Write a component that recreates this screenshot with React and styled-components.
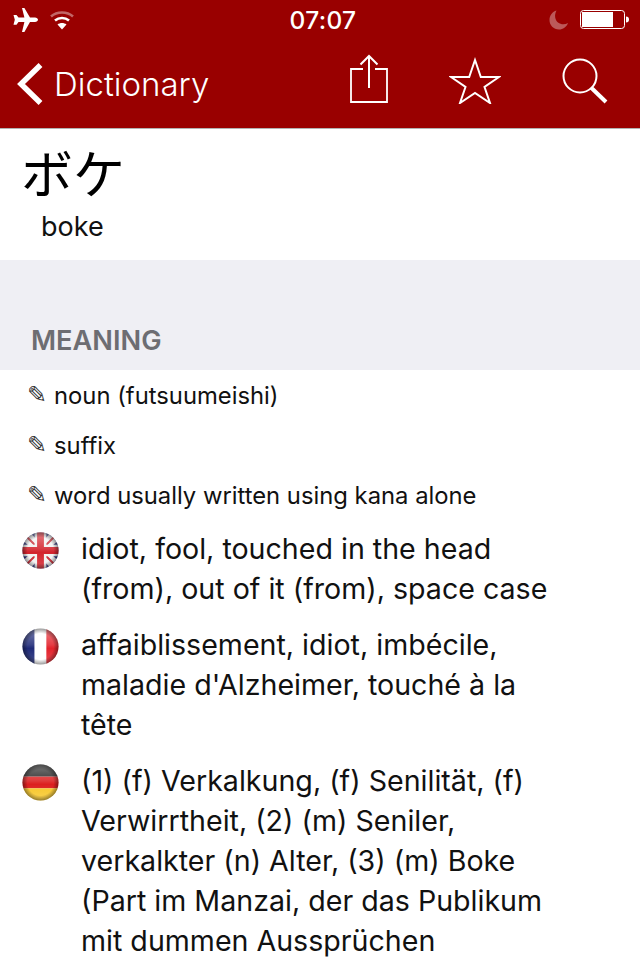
import React from 'react';
import styled, { createGlobalStyle } from 'styled-components';

const GlobalStyle = createGlobalStyle`
  html, body {
    margin: 0;
    padding: 0;
    background: #ffffff;
    overflow: hidden;
  }
  body {
    font-family: Inter, 'Liberation Sans', sans-serif;
  }
`;

const Page = styled.div`
  width: 640px;
  height: 960px;
  overflow: hidden;
  background: #ffffff;
`;

const Header = styled.header`
  height: 128px;
  background: #990000;
  border-bottom: 1px solid #b2b2b2;
  color: #ffffff;
`;

const StatusBar = styled.div`
  height: 40px;
  display: grid;
  grid-template-columns: 1fr auto 1fr;
  align-items: center;
  padding: 0 10px 0 12px;
`;

const StatusLeft = styled.div`
  display: flex;
  align-items: center;
  gap: 11px;
`;

const StatusRight = styled.div`
  display: flex;
  align-items: center;
  justify-content: flex-end;
  gap: 11px;
`;

const Clock = styled.div`
  font-size: 24.5px;
  font-weight: 500;
  letter-spacing: 0.3px;
  margin-left: 4px;
`;

const NavBar = styled.nav`
  height: 88px;
  display: flex;
  align-items: center;
  padding: 0 32px 0 16px;
`;

const BackLink = styled.div`
  display: flex;
  align-items: center;
  gap: 10px;
  flex: 1;
  font-size: 33px;
  font-weight: 300;
`;

const NavActions = styled.div`
  display: flex;
  align-items: flex-end;
  gap: 61px;
  margin-bottom: 10px;
`;

const TitleBlock = styled.section`
  height: 131px;
  padding-left: 21px;
`;

const Kana = styled.div`
  font-family: 'Noto Sans CJK JP', sans-serif;
  font-size: 52px;
  line-height: 70px;
  padding-top: 8px;
  color: #000000;
`;

const Reading = styled.div`
  font-size: 27px;
  line-height: 32px;
  margin-top: 4px;
  padding-left: 20px;
  color: #111111;
`;

const SectionHeader = styled.div`
  height: 110px;
  box-sizing: border-box;
  background: #efeff4;
  display: flex;
  align-items: flex-end;
  padding: 0 0 13px 31px;
  font-size: 27.2px;
  line-height: 32px;
  font-weight: 600;
  color: #6d6d72;
`;

const PartRow = styled.div`
  height: 50px;
  display: flex;
  align-items: center;
  padding-left: 27px;
  font-size: 23.8px;
  color: #111111;
`;

const Pencil = styled.span`
  font-family: 'DejaVu Sans', sans-serif;
  font-size: 24px;
  width: 27px;
  color: #333333;
`;

const Meanings = styled.div`
  display: flex;
  flex-direction: column;
  gap: 16px;
  padding-top: 9px;
`;

const MeaningRow = styled.div`
  display: flex;
  align-items: flex-start;
  padding: 0 22px;
`;

const FlagSlot = styled.div`
  width: 37px;
  height: 37px;
  margin: 3px 22px 0 0;
  flex: none;
`;

const MeaningText = styled.div`
  font-size: 28.6px;
  line-height: 40px;
  color: #111111;
`;

const PlaneIcon = () => (
  <svg width="26" height="24" viewBox="0 0 26 24">
    <path fill="#fff" d="M10 0h2.400l5.600 9.400h5c1.600 0 3 1.100 3 2.300s-1.400 2.300-3 2.300h-5L12.400 24H10l2.400-10H6.500l-2 2.700H1.500L2.800 11.800 1.500 7h3l2 2.600h5.900z" />
  </svg>
);

const WifiIcon = () => (
  <svg width="26" height="20" viewBox="0 0 26 20" fill="none" strokeLinecap="butt">
    <path d="M2 6.500C8 1.200 18 1.200 24 6.500" stroke="#fff" strokeOpacity="0.4" strokeWidth="2.600" />
    <path d="M6 10.600C10 7.200 16 7.200 20 10.600" stroke="#fff" strokeWidth="2.600" />
    <path d="M13 19.500l-4.500-5c2.600-2 6.400-2 9 0z" fill="#fff" />
  </svg>
);

const MoonIcon = () => (
  <svg width="20" height="20" viewBox="0 0 20 20">
    <path fill="#fff" fillOpacity="0.35" d="M7.500 0.500C5 5 6 10 9 12.500c3 2.300 7 2.300 10 0.500-1.500 4-5 6.500-9 6.500C4.500 19.500 0.500 15.200 0.500 10c0-4.500 3-8.300 7-9.500z" />
  </svg>
);

const BatteryIcon = () => (
  <svg width="50" height="20" viewBox="0 0 50 20">
    <rect x="0.500" y="0.500" width="44" height="18" rx="3" fill="none" stroke="#fff" />
    <rect x="2" y="2" width="31" height="15" fill="#fff" />
    <path d="M46 6.500c2 0 3 1 3 3s-1 3-3 3z" fill="#fff" />
  </svg>
);

const BackChevron = () => (
  <svg width="28" height="44" viewBox="0 0 28 44" fill="none">
    <path d="M24.500 3L5 22l19.500 19" stroke="#fff" strokeWidth="5.500" />
  </svg>
);

const ShareIcon = () => (
  <svg width="38" height="50" viewBox="0 0 38 50" fill="none" stroke="#fff" strokeWidth="2">
    <path d="M13 15H1v33h36V15H25" strokeWidth="1.800" />
    <path d="M19 2v32" />
    <path d="M10.500 10.500L19 2l8.500 8.500" />
  </svg>
);

const StarIcon = () => (
  <svg width="52" height="48" viewBox="0 0 52 48" fill="none" stroke="#fff" strokeWidth="2">
    <path d="M26 4l5.800 17H50L35.500 31l5.500 16-15-10-15 10 5.500-16L2 21h18.200z" />
  </svg>
);

const SearchIcon = () => (
  <svg width="46" height="46" viewBox="0 0 46 46" fill="none" stroke="#fff">
    <circle cx="18" cy="18" r="16.500" strokeWidth="2" />
    <path d="M29.500 30L44 44" strokeWidth="4" />
  </svg>
);

const FlagShade = ({ id }) => (
  <>
    <defs>
      <radialGradient id={id} cx="50%" cy="50%" r="50%">
        <stop offset="72%" stopColor="#000" stopOpacity="0" />
        <stop offset="100%" stopColor="#000" stopOpacity="0.4" />
      </radialGradient>
      <linearGradient id={`${id}-gloss`} x1="0" y1="0" x2="0" y2="1">
        <stop offset="0%" stopColor="#fff" stopOpacity="0.4" />
        <stop offset="45%" stopColor="#fff" stopOpacity="0.12" />
        <stop offset="55%" stopColor="#fff" stopOpacity="0" />
        <stop offset="100%" stopColor="#fff" stopOpacity="0.18" />
      </linearGradient>
    </defs>
    <circle cx="19" cy="19" r="18.500" fill={`url(#${id}-gloss)`} />
    <circle cx="19" cy="19" r="18.500" fill={`url(#${id})`} />
  </>
);

const UkFlag = () => (
  <svg width="37" height="37" viewBox="0 0 38 38">
    <clipPath id="uk-clip"><circle cx="19" cy="19" r="18.500" /></clipPath>
    <g clipPath="url(#uk-clip)">
      <rect width="38" height="38" fill="#2a2f7c" />
      <path d="M0 4L34 38M4 0L38 34M0 34L34 0M4 38L38 4" stroke="#f2f2f2" strokeWidth="5" />
      <path d="M0 0L38 38M0 38L38 0" stroke="#c9252f" strokeWidth="2" />
      <path d="M19 0v38M0 19h38" stroke="#f2f2f2" strokeWidth="12" />
      <path d="M19 0v38M0 19h38" stroke="#d3222c" strokeWidth="7" />
    </g>
    <FlagShade id="uk" />
  </svg>
);

const FrFlag = () => (
  <svg width="37" height="37" viewBox="0 0 38 38">
    <clipPath id="fr-clip"><circle cx="19" cy="19" r="18.500" /></clipPath>
    <g clipPath="url(#fr-clip)">
      <rect width="13" height="38" fill="#1f2a78" />
      <rect x="13" width="12" height="38" fill="#ffffff" />
      <rect x="25" width="13" height="38" fill="#e3232c" />
    </g>
    <FlagShade id="fr" />
  </svg>
);

const DeFlag = () => (
  <svg width="37" height="37" viewBox="0 0 38 38">
    <clipPath id="de-clip"><circle cx="19" cy="19" r="18.500" /></clipPath>
    <g clipPath="url(#de-clip)">
      <rect width="38" height="13" fill="#222222" />
      <rect y="13" width="38" height="12" fill="#dc1f1f" />
      <rect y="25" width="38" height="13" fill="#f7c72a" />
    </g>
    <FlagShade id="de" />
  </svg>
);

const parts = ['noun (futsuumeishi)', 'suffix', 'word usually written using kana alone'];

const meanings = [
  { flag: <UkFlag />, text: <>idiot, fool, touched in the head<br />(from), out of it (from), space case</> },
  { flag: <FrFlag />, text: <>affaiblissement, idiot, imbécile,<br />maladie d'Alzheimer, touché à la<br />tête</> },
  { flag: <DeFlag />, text: <>(1) (f) Verkalkung, (f) Senilität, (f)<br />Verwirrtheit, (2) (m) Seniler,<br />verkalkter (n) Alter, (3) (m) Boke<br />(Part im Manzai, der das Publikum<br />mit dummen Aussprüchen</> },
];

const App = () => {
  return (
    <Page>
      <GlobalStyle />
      <Header>
        <StatusBar>
          <StatusLeft>
            <PlaneIcon />
            <WifiIcon />
          </StatusLeft>
          <Clock>07:07</Clock>
          <StatusRight>
            <MoonIcon />
            <BatteryIcon />
          </StatusRight>
        </StatusBar>
        <NavBar>
          <BackLink>
            <BackChevron />
            Dictionary
          </BackLink>
          <NavActions>
            <ShareIcon />
            <StarIcon />
            <SearchIcon />
          </NavActions>
        </NavBar>
      </Header>
      <TitleBlock>
        <Kana>ボケ</Kana>
        <Reading>boke</Reading>
      </TitleBlock>
      <SectionHeader>MEANING</SectionHeader>
      <div>
        {parts.map((part) => (
          <PartRow key={part}>
            <Pencil>✎</Pencil>
            {part}
          </PartRow>
        ))}
      </div>
      <Meanings>
        {meanings.map((item, i) => (
          <MeaningRow key={i}>
            <FlagSlot>{item.flag}</FlagSlot>
            <MeaningText>{item.text}</MeaningText>
          </MeaningRow>
        ))}
      </Meanings>
    </Page>
  );
};

export default App;
